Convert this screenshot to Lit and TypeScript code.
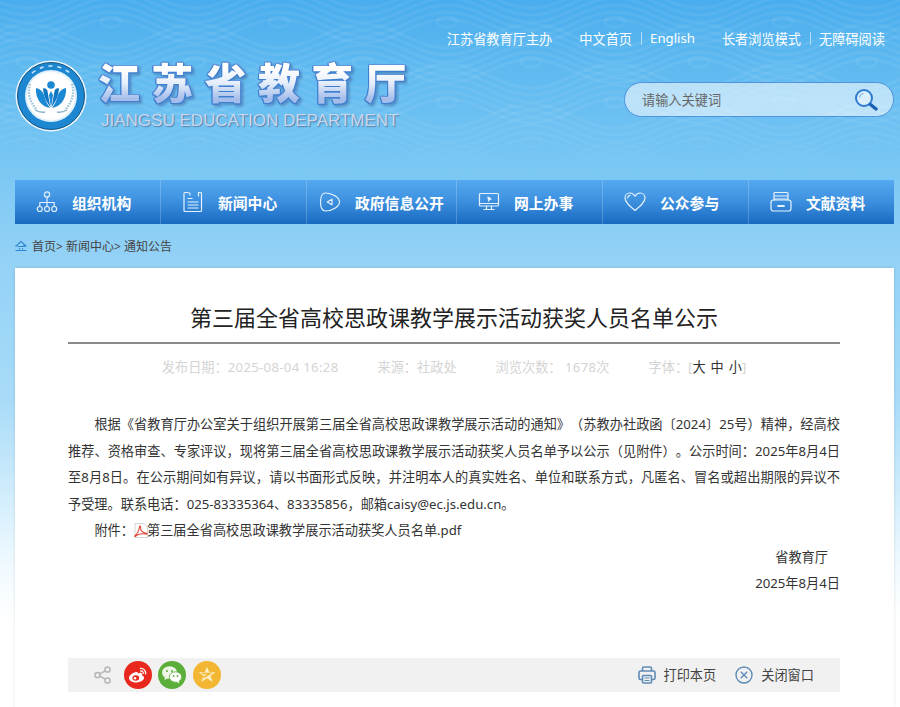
import { LitElement, html, css, svg } from "lit";
import { customElement } from "lit/decorators.js";

const ic = (body: unknown, w = 22, h = 22, vb = "0 0 22 22") =>
  html`<svg class="ic" width=${w} height=${h} viewBox=${vb} fill="none" stroke="#e4f1fd" stroke-width="1.2" stroke-linecap="round" stroke-linejoin="round">${body}</svg>`;

const navItems = [
  { t: "组织机构", pad: 21, icon: ic(svg`<circle cx="11" cy="3.5" r="2.6"/><path d="M11 6.2V11.5M3.8 15.5V11.5H18.2V15.5M11 11.5V15.5"/><circle cx="3.8" cy="18" r="2.5"/><circle cx="11" cy="18" r="2.5"/><circle cx="18.2" cy="18" r="2.5"/>`) },
  { t: "新闻中心", pad: 21, icon: ic(svg`<path d="M5 1.5H2.8Q2 1.5 2 2.5V19.5Q2 20.5 3 20.5H18.5Q19.5 20.5 19.5 19.5V2.5Q19.5 1.5 18.5 1.5H16.5"/><path d="M5 1.5Q8 1.5 8 3V4M6 7.5H10M6 11H16M6 14H16M6 17H16M16.5 1.5V5"/>`) },
  { t: "政府信息公开", pad: 12, icon: ic(svg`<path d="M6.5 2C13 2 20.5 6.5 20.5 11C20.5 15.5 13 20 6.5 20C3 20 1.5 15.5 1.5 11C1.5 6.5 3 2 6.5 2Z"/><path d="M13 8.2V13.8L8.2 11Z"/>`) },
  { t: "网上办事", pad: 21, icon: ic(svg`<rect x="1.5" y="2.5" width="19" height="12.5" rx="1"/><path d="M1.5 12.5H20.5M8.5 15V18M13.5 15V18M6 18.5H16"/><path d="M10 6L13 8L11.3 8.6L10.6 10Z" fill="#e4f1fd"/>`) },
  { t: "公众参与", pad: 21, icon: ic(svg`<path d="M11 19.5C6 15.5 1 11.5 1 7C1 4 3.3 2 5.8 2C8 2 9.8 3.2 11 5.2C12.2 3.2 14 2 16.2 2C18.7 2 21 4 21 7C21 11.5 16 15.5 11 19.5Z"/><path d="M3.5 7C3.7 5.5 4.5 4.6 6 4.3"/>`) },
  { t: "文献资料", pad: 21, icon: ic(svg`<path d="M4 9V2.5Q4 1.5 5 1.5H17Q18 1.5 18 2.5V9M4 5H18M4 8H18"/><rect x="1" y="9" width="20" height="11" rx="2.5"/><path d="M8 15H14" stroke-width="1.8"/>`) },
];

const navWidths = "146px 146px 150px 146px 146px 145px";

function waves() {
  const out: unknown[] = [];
  const P = 168;
  for (let band = 0; band < 5; band++) {
    const top = -4 + band * 40;
    const phase = band % 2 ? P / 2 : 0;
    for (let k = 0; k < 6; k++) {
      const y = top + k * 7;
      let d = "";
      for (let x = -10; x <= 910; x += 8) {
        const v = y + 12 * Math.cos(((x - 27 - phase) / P) * 2 * Math.PI);
        d += (d ? "L" : "M") + x + " " + v.toFixed(1);
      }
      out.push(svg`<path d=${d}/>`);
    }
    for (let x = 27 + phase - P * 2; x < 920; x += P) {
      out.push(svg`<ellipse cx=${x} cy=${top - 14} rx="10" ry="5"/>`);
    }
  }
  return out;
}

@customElement("app-root")
export class AppRoot extends LitElement {
  static styles = css`
    :host {
      display: block;
      position: relative;
      height: 707px;
      overflow: hidden;
      font-family: "Noto Sans", "Noto Sans CJK SC", sans-serif;
      font-size: 13.2px;
      color: #333;
      text-spacing-trim: space-all;
      background: linear-gradient(180deg, #49adee 0, #5fbaf0 70px, #7ac7f4 170px, #92d1f6 250px, #a8dbf8 400px, #eef9ff 560px, #fff 620px);
    }
    .bg {
      position: absolute;
      left: 0;
      top: 0;
      width: 900px;
      height: 180px;
      stroke: #fff;
      stroke-opacity: 0.06;
      stroke-width: 3;
      fill: none;
      -webkit-mask-image: linear-gradient(180deg, #000 65%, transparent 100%);
      mask-image: linear-gradient(180deg, #000 65%, transparent 100%);
    }
    .wrap {
      position: relative;
      display: flex;
      flex-direction: column;
      height: 100%;
    }
    .top {
      display: flex;
      justify-content: flex-end;
      align-items: center;
      height: 18px;
      margin-top: 29px;
      padding-right: 15px;
      color: #fff;
    }
    .top a { white-space: nowrap; }
    .top .sep { width: 1px; height: 13px; background: rgba(255,255,255,.55); margin: 0 8px 0 9px; }
    .top .g1 { margin-right: 27px; }
    .top .g2 { margin-right: 27px; }
    .head {
      display: flex;
      align-items: flex-start;
      height: 133px;
      padding: 13px 6px 0 15px;
      box-sizing: border-box;
    }
    .logo { display: block; flex: none; }
    .brand { margin-left: 11px; flex: none; width: 330px; }
    .cn {
      font-size: 42px;
      line-height: 46px;
      font-weight: 900;
      letter-spacing: 11.3px;
      white-space: nowrap;
      color: transparent;
      background: linear-gradient(180deg, #ffffff 20%, #e6eefb 50%, #a5bdea 85%);
      -webkit-background-clip: text;
      background-clip: text;
      filter: drop-shadow(1px 0 0 #3f7fd0) drop-shadow(-1px 0 0 #3f7fd0) drop-shadow(0 1px 0 #3f7fd0) drop-shadow(0 -1px 0 #5f95da) drop-shadow(2px 2px 1px rgba(60,90,150,.45));
    }
    .en {
      font-family: "Liberation Sans", sans-serif;
      font-size: 17px;
      line-height: 20px;
      white-space: nowrap;
      margin: 5px 0 0 3px;
      color: #c9d7ee;
      text-shadow: 1px 1px 1px rgba(70,90,130,.65);
    }
    .search {
      margin-left: auto;
      margin-top: 22px;
      width: 270px;
      height: 35px;
      box-sizing: border-box;
      border: 1px solid #4f94dc;
      border-radius: 18px;
      background: rgba(255,255,255,.55);
      display: flex;
      align-items: center;
      justify-content: space-between;
      padding: 0 15px 0 17px;
      color: #666;
    }
    nav {
      margin-left: 15px;
      width: 879px;
      height: 44px;
      display: grid;
      flex: none;
      background: linear-gradient(180deg, #55a9f0 0, #3f92e0 45%, #186ac2 100%);
      color: #fff;
    }
    .item {
      display: flex;
      align-items: center;
      gap: 14px;
      border-right: 1px solid rgba(255,255,255,.2);
      font-size: 14.8px;
      font-weight: 700;
      white-space: nowrap;
    }
    .item:last-child { border-right: 0; }
    .ic { display: block; flex: none; }
    .crumb {
      height: 44px;
      flex: none;
      display: flex;
      align-items: center;
      padding-left: 15px;
      font-size: 12px;
      color: #444;
      gap: 5px;
    }
    .card {
      flex: 1;
      margin-left: 15px;
      width: 879px;
      box-sizing: border-box;
      background: #fff;
      box-shadow: 0 0 3px rgba(0,0,0,.12);
      padding: 0 54px 0 53px;
    }
    h1 {
      margin: 0;
      height: 76px;
      box-sizing: border-box;
      border-bottom: 2px solid #8a8a8a;
      text-align: center;
      font-size: 22px;
      font-weight: 400;
      line-height: 99px;
      color: #222;
      white-space: nowrap;
    }
    .meta {
      display: flex;
      justify-content: center;
      gap: 39px;
      color: #d4d4d4;
      margin-top: 13px;
      line-height: 20px;
      white-space: nowrap;
    }
    .meta .num { letter-spacing: 0.3px; }
    .meta b { font-weight: 400; color: #333; word-spacing: 1.5px; }
    .body { margin-top: 34px; line-height: 26.5px; color: #333; }
    .body p { margin: 0; text-align: justify; }
    .body .ind { text-indent: 26.4px; }
    .body .sig1 { text-align: right; padding-right: 12px; }
    .body .sig2 { text-align: right; }
    .pdf { display: inline-block; vertical-align: -3px; margin-right: -1px; text-indent: 0; }
    .tools {
      margin-top: 61px;
      height: 34px;
      background: #f1f1f1;
      display: flex;
      align-items: center;
      padding: 0 26px 0 26px;
      color: #444;
    }
    .round { width: 28px; height: 28px; border-radius: 50%; display: flex; align-items: center; justify-content: center; flex: none; margin-left: 6px; }
    .round svg { display: block; }
    .wb { background: #e8281c; margin-left: 12px; }
    .wx { background: #5cae3a; }
    .st { background: #f2b632; margin-left: 7px; }
    .spacer { flex: 1; }
    .act { display: flex; align-items: center; gap: 8px; margin-left: 19px; }
    .act svg { display: block; }
  `;

  render() {
    return html`
      <svg class="bg" viewBox="0 0 900 180">${waves()}</svg>
      <div class="wrap">
        <div class="top">
          <a class="g1">江苏省教育厅主办</a>
          <a>中文首页</a><span class="sep"></span><a class="g2">English</a>
          <a>长者浏览模式</a><span class="sep"></span><a>无障碍阅读</a>
        </div>
        <div class="head">
          <svg class="logo" width="72" height="72" viewBox="0 0 72 72">
            <circle cx="36" cy="36" r="35.5" fill="#eaf6fe"/>
            <circle cx="36" cy="36" r="33.5" fill="#1d87d2"/>
            <circle cx="36" cy="36" r="33.5" fill="none" stroke="#13527f" stroke-width="1"/>
            <circle cx="36" cy="36" r="26" fill="#dff1fb"/>
            <circle cx="36" cy="36" r="24" fill="#fff"/>
            <circle cx="36" cy="25" r="3.8" fill="#1b88d4"/>
            <path d="M21 28C26 29 29 33 30 38C31 42 33 45 35 48C28 47 20 40 21 28Z" fill="#1b88d4"/>
            <path d="M51 28C46 29 43 33 42 38C41 42 39 45 37 48C44 47 52 40 51 28Z" fill="#1b88d4"/>
            <path d="M28 28.5C30 27.5 32 29 32.5 31C33.2 35 34.2 41 35.3 47C31.5 42 28.5 36 28 28.5Z" fill="#1277c2"/>
            <path d="M44 28.5C42 27.5 40 29 39.5 31C38.8 35 37.8 41 36.7 47C40.5 42 43.5 36 44 28.5Z" fill="#1277c2"/>
            <path d="M36 31L38 35L36 48L34 35Z" fill="#1b88d4"/>
            <path d="M15 24Q11 38 22 50M57 24Q61 38 50 50" stroke="#9cc3d8" stroke-width="2.4" stroke-dasharray="1.6 1.2" fill="none"/>
            <path d="M20 50Q25 53 30 52M52 50Q47 53 42 52" stroke="#8ab4cc" stroke-width="1.4" fill="none"/>
            <path d="M17 13Q36 -1 55 13" stroke="#cfe9f8" stroke-width="1.6" stroke-dasharray="4 5" fill="none"/>
          </svg>
          <div class="brand">
            <div class="cn">江苏省教育厅</div>
            <div class="en">JIANGSU EDUCATION DEPARTMENT</div>
          </div>
          <div class="search">
            <span>请输入关键词</span>
            <svg width="24" height="24" viewBox="0 0 24 24">
              <circle cx="10" cy="10" r="8" fill="rgba(255,255,255,.45)" stroke="#2f7bd0" stroke-width="2"/>
              <path d="M5.5 9.5Q6 6 9.5 5.5" stroke="#7db4ea" stroke-width="1.2" fill="none"/>
              <path d="M16.5 16.5L22 21" stroke="#1c5fb5" stroke-width="3.4" stroke-linecap="round"/>
            </svg>
          </div>
        </div>
        <nav style="grid-template-columns:${navWidths}">
          ${navItems.map((n) => html`<div class="item" style="padding-left:${n.pad}px">${n.icon}<span>${n.t}</span></div>`)}
        </nav>
        <div class="crumb">
          <svg width="12" height="12" viewBox="0 0 12 12" fill="none" stroke="#2f86d6" stroke-width="1.1">
            <path d="M0.5 6.5L6 1.5L11.5 6.5M2.5 6.5H9.5L8.6 4.8" />
            <path d="M4.5 8V9.5M7.5 8V9.5M0.5 10.5H11.5"/>
          </svg>
          <span>首页&gt; 新闻中心&gt; 通知公告</span>
        </div>
        <div class="card">
          <h1>第三届全省高校思政课教学展示活动获奖人员名单公示</h1>
          <div class="meta">
            <span>发布日期：<span class="num">2025-08-04 16:28</span></span>
            <span>来源：社政处</span>
            <span>浏览次数： <span class="num">1678</span>次</span>
            <span>字体：[<b>大 中 小</b>]</span>
          </div>
          <div class="body">
            <p class="ind">根据《省教育厅办公室关于组织开展第三届全省高校思政课教学展示活动的通知》（苏教办社政函〔2024〕25号）精神，经高校推荐、资格审查、专家评议，现将第三届全省高校思政课教学展示活动获奖人员名单予以公示（见附件）。公示时间：2025年8月4日至8月8日。在公示期间如有异议，请以书面形式反映，并注明本人的真实姓名、单位和联系方式，凡匿名、冒名或超出期限的异议不予受理。联系电话：025-83335364、83335856，邮箱caisy@ec.js.edu.cn。</p>
            <p class="ind">附件：<svg class="pdf" width="14" height="15" viewBox="0 0 14 15">
              <path d="M1 .5H10L13.5 4V14.5H1Z" fill="#fff" stroke="#c9c9c9" stroke-width=".8"/>
              <path d="M.8 13C3 11 5 8 5.5 4C5.7 2.5 6.8 2.6 6.6 4.5C6.4 7 8 9.5 12.5 10.2C13.6 10.5 13 11.3 11.5 11C8.5 10.5 5 10.5 2.5 12.5C1.5 13.4 .5 14 .8 13Z" fill="none" stroke="#e2483c" stroke-width="1.1"/>
            </svg>第三届全省高校思政课教学展示活动获奖人员名单.pdf</p>
            <p class="sig1">省教育厅</p>
            <p class="sig2">2025年8月4日</p>
          </div>
          <div class="tools">
            <svg width="18" height="18" viewBox="0 0 18 18" fill="none" stroke="#b5b5b5" stroke-width="1.5">
              <circle cx="13.5" cy="3.5" r="2.6"/><circle cx="3.5" cy="9" r="2.6"/><circle cx="13.5" cy="14.5" r="2.6"/>
              <path d="M5.8 7.8L11.2 4.8M5.8 10.2L11.2 13.2"/>
            </svg>
            <span class="round wb"><svg width="20" height="18" viewBox="0 0 20 18">
              <path d="M8 6C3.5 7 1 10 1 12C1 15 4.8 16.5 8.5 16.5C12.5 16.5 16 14.3 16 11.8C16 10.4 14.9 9.9 14 9.6C14.5 8.2 14.3 7 12.8 6.7C11.5 6.5 10.2 7 9.5 7.4C9.8 6.2 9.3 5.7 8 6Z" fill="#fff"/>
              <ellipse cx="7.8" cy="12" rx="3.4" ry="2.7" fill="#e8281c"/>
              <circle cx="7" cy="12.2" r="1.3" fill="#fff"/>
              <path d="M12.5 2.5C15.5 2.2 18 4.8 17.6 7.8M12.8 5C14.3 4.8 15.5 6 15.2 7.4" stroke="#fff" stroke-width="1.3" fill="none" stroke-linecap="round"/>
            </svg></span>
            <span class="round wx"><svg width="22" height="20" viewBox="0 0 22 20">
              <ellipse cx="8.5" cy="7.5" rx="7.5" ry="6.2" fill="#eef7e6"/>
              <path d="M4 11.5L3.5 15L7.5 13Z" fill="#eef7e6"/>
              <circle cx="6" cy="6" r="1" fill="#5cae3a"/><circle cx="11" cy="6" r="1" fill="#5cae3a"/>
              <ellipse cx="14.5" cy="12" rx="6.2" ry="5.2" fill="#fff" stroke="#5cae3a" stroke-width=".8"/>
              <path d="M17.5 15.5L18.5 18.5L15 16.5Z" fill="#fff"/>
              <circle cx="12.5" cy="11" r=".9" fill="#5cae3a"/><circle cx="16.5" cy="11" r=".9" fill="#5cae3a"/>
            </svg></span>
            <span class="round st"><svg width="20" height="18" viewBox="0 0 20 18">
              <path d="M10 1L12.4 6.3H18.5L13.6 9.8L15.6 16L10 12.2L4.4 16L6.4 9.8L1.5 6.3H7.6Z" fill="#fbeec4"/>
              <path d="M5 7.5H13L6.5 11.5" stroke="#f2b632" stroke-width="1.5" fill="none"/>
            </svg></span>
            <span class="spacer"></span>
            <span class="act">
              <svg width="18" height="18" viewBox="0 0 18 18" fill="none" stroke="#5f8bb5" stroke-width="1.6">
                <path d="M4.5 5V2.5Q4.5 1 6 1H12Q13.5 1 13.5 2.5V5"/>
                <path d="M4.5 13.5H2.5Q1 13.5 1 12V6.5Q1 5 2.5 5H15.5Q17 5 17 6.5V12Q17 13.5 15.5 13.5H13.5"/>
                <rect x="4.5" y="9.5" width="9" height="7.5" rx="1"/>
                <path d="M6.5 12H11.5M6.5 14.5H11.5" stroke-width="1"/>
              </svg>
              <span>打印本页</span>
            </span>
            <span class="act">
              <svg width="18" height="18" viewBox="0 0 18 18" fill="none" stroke="#5f8bb5" stroke-width="1.4">
                <circle cx="9" cy="9" r="8"/><path d="M5.8 5.8L12.2 12.2M12.2 5.8L5.8 12.2"/>
              </svg>
              <span>关闭窗口</span>
            </span>
          </div>
        </div>
      </div>
    `;
  }
}
